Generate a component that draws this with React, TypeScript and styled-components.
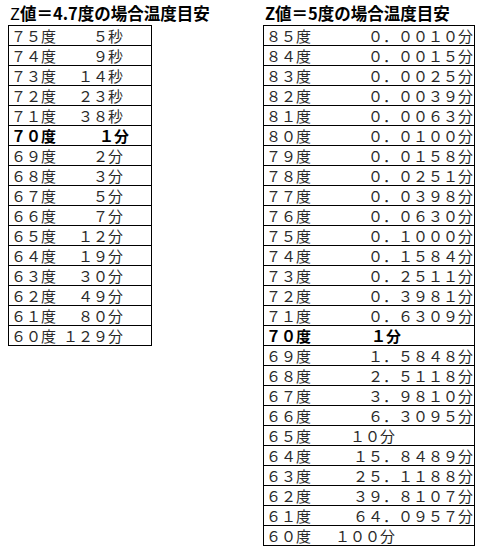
import styled, { createGlobalStyle } from "styled-components";

const GlobalStyle = createGlobalStyle`
  html, body {
    margin: 0;
    padding: 0;
    background: #ffffff;
  }
  body {
    font-family: "Noto Sans CJK JP", "DejaVu Sans", sans-serif;
    color: #1a1a1a;
  }
`;

type Entry = { temp: string; time: string; bold?: boolean; short?: boolean };

const z47: Entry[] = [
  { temp: "７５度", time: "５秒" },
  { temp: "７４度", time: "９秒" },
  { temp: "７３度", time: "１４秒" },
  { temp: "７２度", time: "２３秒" },
  { temp: "７１度", time: "３８秒" },
  { temp: "７０度", time: "１分", bold: true },
  { temp: "６９度", time: "２分" },
  { temp: "６８度", time: "３分" },
  { temp: "６７度", time: "５分" },
  { temp: "６６度", time: "７分" },
  { temp: "６５度", time: "１２分" },
  { temp: "６４度", time: "１９分" },
  { temp: "６３度", time: "３０分" },
  { temp: "６２度", time: "４９分" },
  { temp: "６１度", time: "８０分" },
  { temp: "６０度", time: "１２９分" },
];

const z5: Entry[] = [
  { temp: "８５度", time: "０．００１０分" },
  { temp: "８４度", time: "０．００１５分" },
  { temp: "８３度", time: "０．００２５分" },
  { temp: "８２度", time: "０．００３９分" },
  { temp: "８１度", time: "０．００６３分" },
  { temp: "８０度", time: "０．０１００分" },
  { temp: "７９度", time: "０．０１５８分" },
  { temp: "７８度", time: "０．０２５１分" },
  { temp: "７７度", time: "０．０３９８分" },
  { temp: "７６度", time: "０．０６３０分" },
  { temp: "７５度", time: "０．１０００分" },
  { temp: "７４度", time: "０．１５８４分" },
  { temp: "７３度", time: "０．２５１１分" },
  { temp: "７２度", time: "０．３９８１分" },
  { temp: "７１度", time: "０．６３０９分" },
  { temp: "７０度", time: "１分", bold: true, short: true },
  { temp: "６９度", time: "１．５８４８分" },
  { temp: "６８度", time: "２．５１１８分" },
  { temp: "６７度", time: "３．９８１０分" },
  { temp: "６６度", time: "６．３０９５分" },
  { temp: "６５度", time: "１０分", short: true },
  { temp: "６４度", time: "１５．８４８９分" },
  { temp: "６３度", time: "２５．１１８８分" },
  { temp: "６２度", time: "３９．８１０７分" },
  { temp: "６１度", time: "６４．０９５７分" },
  { temp: "６０度", time: "１００分", short: true },
];

const Page = styled.div`
  display: flex;
  align-items: flex-start;
  gap: 111px;
  padding: 4px 0 0 8px;
`;

const Column = styled.div<{ $width: number }>`
  display: flex;
  flex-direction: column;
  width: ${({ $width }) => $width}px;
`;

const Title = styled.h2`
  margin: 0 0 0 2px;
  height: 21px;
  font-size: 16.5px;
  line-height: 19px;
  font-weight: 700;
  white-space: nowrap;
  color: #000;
  font-family: "Noto Sans CJK JP", sans-serif;
`;

const Thin = styled.span`
  font-weight: 400;
`;

const Table = styled.div`
  border: 1px solid #000;
  border-bottom: none;
`;

const Row = styled.div<{ $bold?: boolean }>`
  display: flex;
  align-items: center;
  justify-content: space-between;
  height: 19px;
  border-bottom: 1px solid #000;
  padding-left: 2px;
  font-size: 15px;
  line-height: 19px;
  font-weight: ${({ $bold }) => ($bold ? 700 : 400)};
  color: ${({ $bold }) => ($bold ? "#000" : "#2a2a2a")};
  white-space: nowrap;
`;

const Label = styled.span``;

const Value = styled.span<{ $right: number }>`
  padding-right: ${({ $right }) => $right}px;
`;

function TempTable({
  rows,
  gap,
  shortGap,
}: {
  rows: Entry[];
  gap: number;
  shortGap: number;
}) {
  return (
    <Table>
      {rows.map((r) => {
        const base = r.short ? shortGap : gap;
        return (
          <Row key={r.temp} $bold={r.bold}>
            <Label>{r.temp}</Label>
            <Value $right={r.bold ? base - 6 : base}>{r.time}</Value>
          </Row>
        );
      })}
    </Table>
  );
}

export default function App() {
  return (
    <>
      <GlobalStyle />
      <Page>
        <Column $width={144}>
          <Title>
            <Thin>Z</Thin>値＝4.7度の場合温度目安
          </Title>
          <TempTable rows={z47} gap={28} shortGap={28} />
        </Column>
        <Column $width={212}>
          <Title>Z値＝5度の場合温度目安</Title>
          <TempTable rows={z5} gap={1} shortGap={79} />
        </Column>
      </Page>
    </>
  );
}
